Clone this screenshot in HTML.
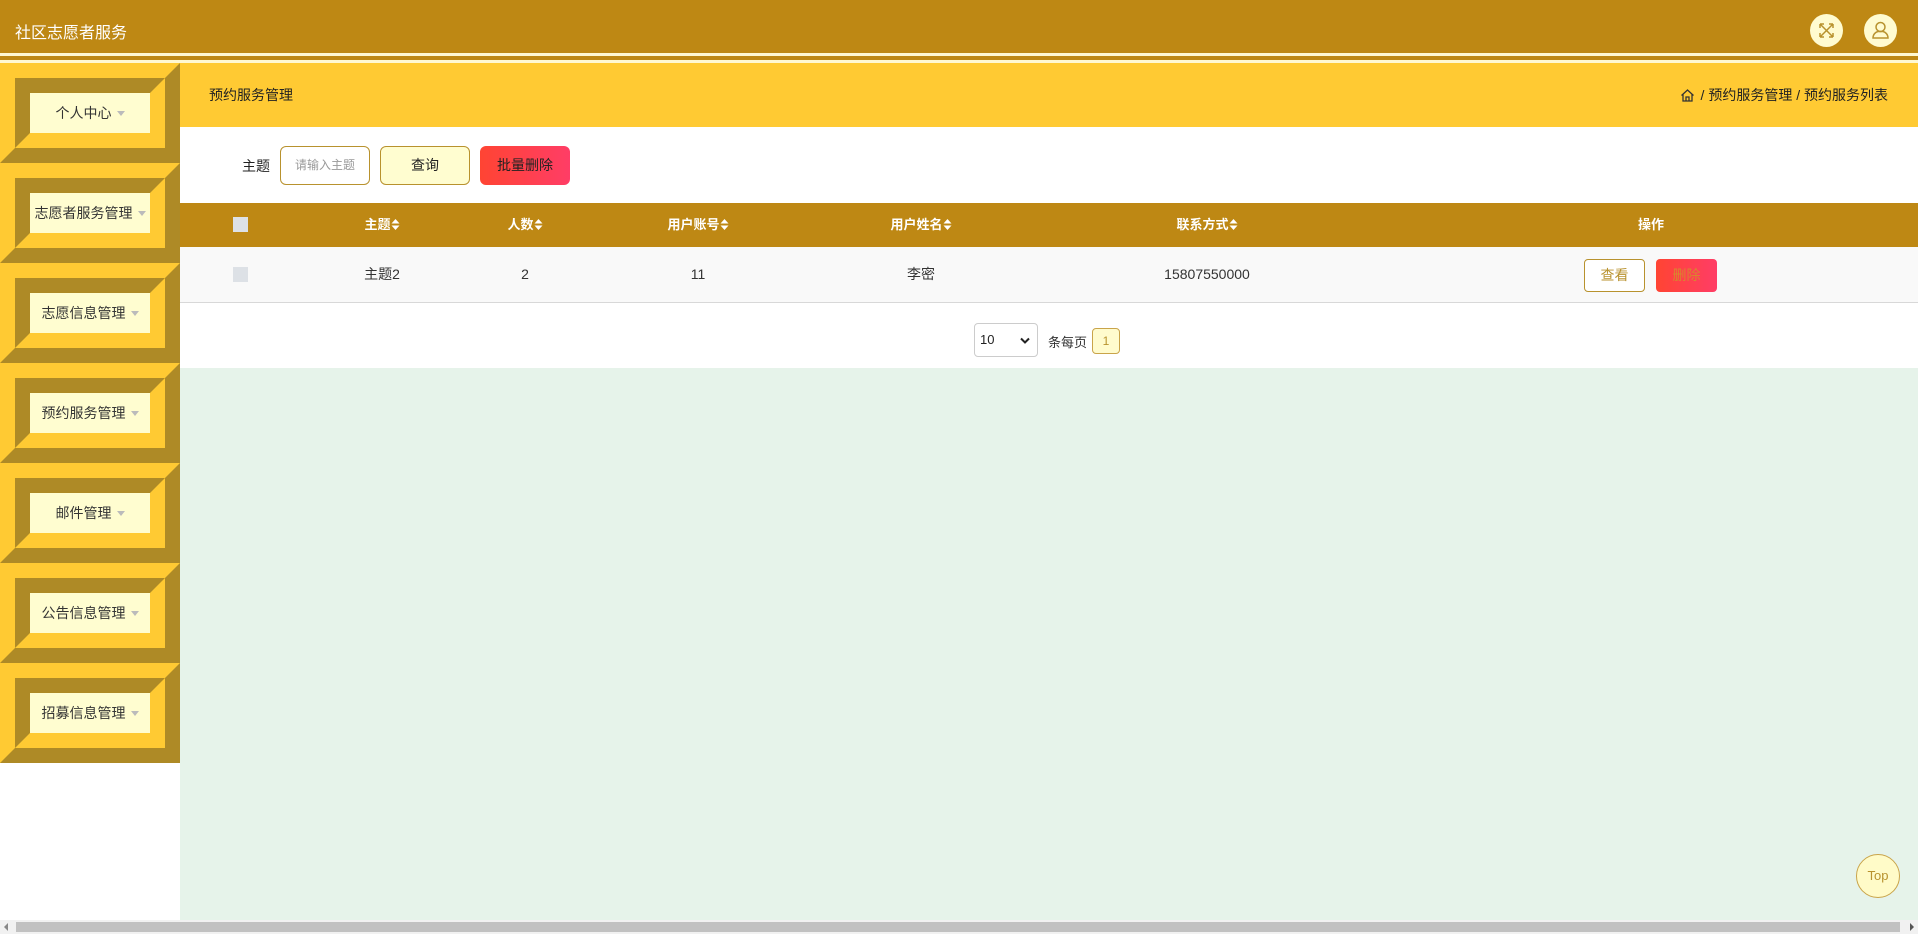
<!DOCTYPE html>
<html><head><meta charset="utf-8"><style>
*{margin:0;padding:0;box-sizing:border-box}
body{width:1918px;height:934px;overflow:hidden;position:relative;background:#fff;font-family:"Liberation Sans","Noto Sans CJK SC",sans-serif;color:#333}
.a{position:absolute}
.hdr{left:0;top:0;width:1918px;height:53px;background:#BE8814}
.ttl{left:15px;top:19px;color:#fff;font-size:16px}
.ico{width:33px;height:33px;border-radius:50%;background:#FFFBD0;top:14px}
.item{left:0;width:180px;height:100px;border-style:solid;border-width:15px;border-color:#FFCA33 #AE8A26 #AE8A26 #FFCA33}
.in{width:150px;height:70px;border-style:solid;border-width:15px;border-color:#AE8A26 #FFCA33 #FFCA33 #AE8A26}
.lab{width:120px;height:40px;background:#FFFDD0;font-size:14px;color:#333;display:flex;align-items:center;justify-content:center;white-space:nowrap}
.car{display:inline-block;width:0;height:0;border-left:4px solid transparent;border-right:4px solid transparent;border-top:5px solid #bbb;margin-left:5px;margin-top:1px}
.th{top:203px;height:44px;line-height:44px;color:#fff;font-weight:bold;font-size:13px;transform:translateX(-50%);white-space:nowrap}
.td{top:247px;height:55px;line-height:55px;font-size:14px;color:#333;transform:translateX(-50%);white-space:nowrap}
.ar{display:inline-block;vertical-align:-1px;margin-left:1px}
</style></head><body>
<div class="a hdr"></div>
<div class="a ttl">社区志愿者服务</div>
<div class="a ico" style="left:1810px"><svg width="33" height="33" viewBox="0 0 33 33" fill="none" stroke="#B8922E" stroke-width="1.5"><path d="M10 10l13 13M23 10L10 23M10 10h4M10 10v4M23 10h-4M23 10v4M10 23h4M10 23v-4M23 23h-4M23 23v-4"/></svg></div>
<div class="a ico" style="left:1864px"><svg width="33" height="33" viewBox="0 0 33 33" fill="none" stroke="#B8922E" stroke-width="1.5"><circle cx="16.5" cy="13" r="4.5"/><path d="M9 24c0-4 3-6 5-6.5h5c2 .5 5 2.5 5 6.5z"/></svg></div>
<div class="a" style="left:0;top:53px;width:1918px;height:3px;background:#FFF8D2"></div>
<div class="a" style="left:0;top:56px;width:1918px;height:4px;background:#BE8814"></div>
<div class="a" style="left:0;top:60px;width:1918px;height:3px;background:#FFF8D2"></div>

<div class="a item" style="top:63px"><div class="in"><div class="lab">个人中心<span class="car"></span></div></div></div>
<div class="a item" style="top:163px"><div class="in"><div class="lab">志愿者服务管理<span class="car"></span></div></div></div>
<div class="a item" style="top:263px"><div class="in"><div class="lab">志愿信息管理<span class="car"></span></div></div></div>
<div class="a item" style="top:363px"><div class="in"><div class="lab">预约服务管理<span class="car"></span></div></div></div>
<div class="a item" style="top:463px"><div class="in"><div class="lab">邮件管理<span class="car"></span></div></div></div>
<div class="a item" style="top:563px"><div class="in"><div class="lab">公告信息管理<span class="car"></span></div></div></div>
<div class="a item" style="top:663px"><div class="in"><div class="lab">招募信息管理<span class="car"></span></div></div></div>

<div class="a" style="left:180px;top:63px;width:1738px;height:64px;background:#FFCA33"></div>
<div class="a" style="left:209px;top:85px;font-size:14px;color:#222">预约服务管理</div>
<div class="a" style="right:30px;top:85px;font-size:14px;color:#222;display:flex;align-items:center"><svg width="15" height="15" viewBox="0 0 15 15" fill="none" stroke="#333" stroke-width="1.3" style="margin-right:6px"><path d="M1.5 7.5L7.5 2l6 5.5M3 6.5V13h9V6.5M6 13V9h3v4"/></svg>/ 预约服务管理 / 预约服务列表</div>

<div class="a" style="left:242px;top:156px;font-size:14px;color:#222">主题</div>
<div class="a" style="left:280px;top:146px;width:90px;height:39px;border:1px solid #B8922E;border-radius:6px;font-size:12px;color:#999;line-height:37px;text-align:center">请输入主题</div>
<div class="a" style="left:380px;top:146px;width:90px;height:39px;border:1px solid #B8922E;border-radius:6px;background:#FFFDD0;font-size:14px;color:#222;line-height:37px;text-align:center">查询</div>
<div class="a" style="left:480px;top:146px;width:90px;height:39px;border-radius:6px;background:linear-gradient(90deg,#FF4433,#FF3D66);font-size:14px;color:#222;line-height:39px;text-align:center">批量删除</div>

<div class="a" style="left:180px;top:203px;width:1738px;height:44px;background:#BE8814"></div>
<div class="a" style="left:233px;top:217px;width:15px;height:15px;background:#DDE1E6"></div>
<div class="a th" style="left:382px">主题<svg class="ar" width="8" height="11" viewBox="0 0 8 11"><path d="M0 4.5L4 0l4 4.5zM0 6.5L4 11l4-4.5z" fill="#fff"/></svg></div>
<div class="a th" style="left:525px">人数<svg class="ar" width="8" height="11" viewBox="0 0 8 11"><path d="M0 4.5L4 0l4 4.5zM0 6.5L4 11l4-4.5z" fill="#fff"/></svg></div>
<div class="a th" style="left:698px">用户账号<svg class="ar" width="8" height="11" viewBox="0 0 8 11"><path d="M0 4.5L4 0l4 4.5zM0 6.5L4 11l4-4.5z" fill="#fff"/></svg></div>
<div class="a th" style="left:921px">用户姓名<svg class="ar" width="8" height="11" viewBox="0 0 8 11"><path d="M0 4.5L4 0l4 4.5zM0 6.5L4 11l4-4.5z" fill="#fff"/></svg></div>
<div class="a th" style="left:1207px">联系方式<svg class="ar" width="8" height="11" viewBox="0 0 8 11"><path d="M0 4.5L4 0l4 4.5zM0 6.5L4 11l4-4.5z" fill="#fff"/></svg></div>
<div class="a th" style="left:1651px">操作</div>

<div class="a" style="left:180px;top:247px;width:1738px;height:56px;background:#F9F9F9;border-bottom:1px solid #D8D8D8"></div>
<div class="a" style="left:233px;top:267px;width:15px;height:15px;background:#DDE1E6"></div>
<div class="a td" style="left:382px">主题2</div>
<div class="a td" style="left:525px">2</div>
<div class="a td" style="left:698px">11</div>
<div class="a td" style="left:921px">李密</div>
<div class="a td" style="left:1207px">15807550000</div>
<div class="a" style="left:1584px;top:259px;width:61px;height:33px;border:1px solid #B8922E;border-radius:4px;background:#fff;color:#B8922E;font-size:14px;line-height:31px;text-align:center">查看</div>
<div class="a" style="left:1656px;top:259px;width:61px;height:33px;border-radius:4px;background:linear-gradient(90deg,#FF4433,#FF3D66);color:#D8862E;font-size:14px;line-height:33px;text-align:center">删除</div>

<div class="a" style="left:974px;top:323px;width:64px;height:34px;border:1px solid #ccc;border-radius:4px;background:#fff;font-size:13px;line-height:32px;padding-left:5px;color:#222">10<svg width="10" height="8" viewBox="0 0 10 8" style="position:absolute;right:7px;top:13px"><path d="M1 1.5l4 4 4-4" stroke="#222" stroke-width="2" fill="none"/></svg></div>
<div class="a" style="left:1048px;top:332px;font-size:13px;color:#333">条每页</div>
<div class="a" style="left:1092px;top:328px;width:28px;height:26px;border:1px solid #C9A44A;border-radius:4px;background:#FFFBCD;font-size:12px;color:#B8922E;line-height:24px;text-align:center">1</div>

<div class="a" style="left:180px;top:368px;width:1738px;height:552px;background:#E6F3EA"></div>
<div class="a" style="left:1856px;top:854px;width:44px;height:44px;border-radius:50%;border:1px solid #C9A44A;background:#FFFBC8;color:#B8922E;font-size:13px;line-height:42px;text-align:center">Top</div>

<div class="a" style="left:0;top:920px;width:1918px;height:14px;background:#F1F1F1"></div>
<div class="a" style="left:16px;top:922px;width:1884px;height:10px;background:#C1C1C1"></div>
<div class="a" style="left:4px;top:923px;width:0;height:0;border-top:4px solid transparent;border-bottom:4px solid transparent;border-right:4px solid #888"></div>
<div class="a" style="left:1910px;top:923px;width:0;height:0;border-top:4px solid transparent;border-bottom:4px solid transparent;border-left:4px solid #555"></div>
</body></html>
